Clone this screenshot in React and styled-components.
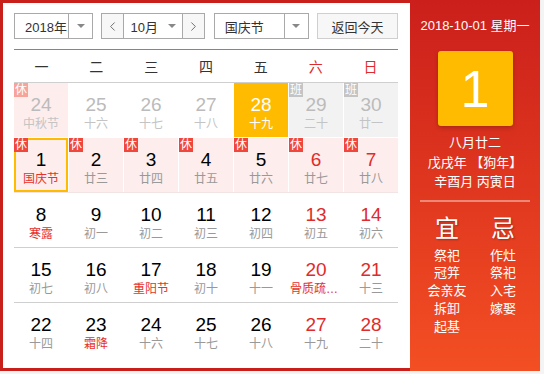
import React from 'react';
import styled, { createGlobalStyle } from 'styled-components';
import { ChevronLeft, ChevronRight } from 'lucide-react';

const GlobalStyle = createGlobalStyle`
  body {
    margin: 0;
    background: #f4f4f4;
    font-family: "Liberation Sans", "Noto Sans CJK SC", sans-serif;
  }
  * { box-sizing: border-box; }
`;

const Widget = styled.div`
  display: flex;
  width: 540px;
  height: 371px;
`;

const Main = styled.div`
  width: 410px;
  border: 3px solid #c91f1b;
  border-right: none;
  background: #fff;
  padding: 10px 12px 0 11px;
`;

const Toolbar = styled.div`
  display: flex;
  justify-content: space-between;
  height: 26px;
  padding-bottom: 10px;
  box-sizing: content-box;
  border-bottom: 1px solid #e95c55;
`;

const SelectBox = styled.div`
  display: flex;
  width: ${({ $w }) => $w}px;
  height: 26px;
  border: 1px solid #a9a9a9;
  background: #fff;
  font-size: 13px;
  color: #333;
`;

const SelectLabel = styled.div`
  flex: 1;
  min-width: 0;
  display: flex;
  align-items: center;
  white-space: nowrap;
  justify-content: ${({ $center }) => ($center ? 'center' : 'flex-start')};
  padding-left: ${({ $pad = 0 }) => $pad}px;
`;

const ArrowPart = styled.div`
  width: 24px;
  flex-shrink: 0;
  display: flex;
  align-items: center;
  justify-content: center;
  border-left: 1px solid #a9a9a9;
  &::after {
    content: '';
    border-left: 4px solid transparent;
    border-right: 4px solid transparent;
    border-top: 4px solid #888;
  }
`;

const InlineArrow = styled.span`
  margin: 0 0 0 10px;
  border-left: 4px solid transparent;
  border-right: 4px solid transparent;
  border-top: 4px solid #888;
`;

const StepButton = styled.div`
  width: 22px;
  flex-shrink: 0;
  display: flex;
  align-items: center;
  justify-content: center;
  background: #f7f7f7;
  color: #666;
  border-${({ $side }) => $side}: 1px solid #a9a9a9;
`;

const TodayButton = styled.div`
  width: 81px;
  height: 26px;
  display: flex;
  align-items: center;
  justify-content: center;
  border: 1px solid #cfcfcf;
  background: #f7f7f7;
  font-size: 13px;
  color: #333;
`;

const WeekHeader = styled.div`
  display: grid;
  grid-template-columns: repeat(7, 1fr);
  height: 33px;
  border-bottom: 1px solid #cfcfcf;
`;

const WeekDay = styled.div`
  display: flex;
  align-items: center;
  justify-content: center;
  font-size: 14px;
  color: ${({ $red }) => ($red ? '#e02b2b' : '#333')};
`;

const Week = styled.div`
  display: grid;
  grid-template-columns: repeat(7, 1fr);
  column-gap: 1px;
  height: 55px;
  border-bottom: 1px solid ${({ $line }) => $line};
  &:last-child { border-bottom: none; }
`;

const Cell = styled.div`
  position: relative;
  display: flex;
  flex-direction: column;
  align-items: center;
  padding-top: 12px;
  background: ${({ $bg }) => $bg};
  box-shadow: ${({ $selected }) => ($selected ? 'inset 0 0 0 2px #ffbb00' : 'none')};
  overflow: hidden;
`;

const DayNum = styled.div`
  font-size: 19px;
  line-height: 20px;
  color: ${({ $color }) => $color};
`;

const Lunar = styled.div`
  margin-top: 1px;
  max-width: 52px;
  font-size: 12px;
  line-height: 16px;
  white-space: nowrap;
  overflow: hidden;
  text-overflow: ellipsis;
  color: ${({ $color }) => $color};
`;

const Badge = styled.span`
  position: absolute;
  top: 0;
  left: 0;
  width: 14px;
  height: 14px;
  font-size: 12px;
  line-height: 14px;
  text-align: center;
  color: #fff;
  background: ${({ $bg }) => $bg};
`;

const Side = styled.div`
  width: 130px;
  display: flex;
  flex-direction: column;
  align-items: center;
  background: linear-gradient(#cb1f1b, #f34f23);
  color: #fff;
`;

const DateLine = styled.div`
  margin-top: 17px;
  font-size: 13px;
  line-height: 18px;
`;

const DayCard = styled.div`
  margin-top: 16px;
  width: 75px;
  height: 75px;
  border-radius: 3px;
  background: #ffbb00;
  box-shadow: 0 2px 4px rgba(0, 0, 0, 0.2);
  display: flex;
  align-items: center;
  justify-content: center;
  font-size: 52px;
`;

const LunarInfo = styled.div`
  margin-top: 7px;
  font-size: 13px;
  line-height: 19.5px;
  text-align: center;
`;

const Divider = styled.div`
  margin-top: 8px;
  width: 110px;
  height: 2px;
  background: rgba(255, 255, 255, 0.4);
`;

const Advice = styled.div`
  display: grid;
  grid-template-columns: 56px 56px;
  margin-top: 13px;
`;

const AdviceCol = styled.div`
  display: flex;
  flex-direction: column;
  align-items: center;
`;

const AdviceTitle = styled.div`
  font-size: 24px;
  line-height: 28px;
  text-shadow: 1px 1px 2px rgba(0, 0, 0, 0.3);
`;

const AdviceList = styled.div`
  margin-top: 4px;
  font-size: 13px;
  line-height: 17.8px;
  text-align: center;
  white-space: nowrap;
`;

const PINK = '#fdeeed';
const weekDays = ['一', '二', '三', '四', '五', '六', '日'];

const weeks = [
  {
    line: '#fff',
    days: [
      { d: 24, l: '中秋节', muted: true, bg: PINK, badge: 'fade' },
      { d: 25, l: '十六', muted: true },
      { d: 26, l: '十七', muted: true },
      { d: 27, l: '十八', muted: true },
      { d: 28, l: '十九', today: true, bg: '#ffbb00' },
      { d: 29, l: '二十', muted: true, bg: '#f2f2f2', badge: 'work' },
      { d: 30, l: '廿一', muted: true, bg: '#f2f2f2', badge: 'work' },
    ],
  },
  {
    line: '#f2e4e4',
    days: [
      { d: 1, l: '国庆节', fest: true, selected: true },
      { d: 2, l: '廿三' },
      { d: 3, l: '廿四' },
      { d: 4, l: '廿五' },
      { d: 5, l: '廿六' },
      { d: 6, l: '廿七' },
      { d: 7, l: '廿八' },
    ].map((c) => ({ ...c, bg: PINK, badge: 'rest' })),
  },
  {
    line: '#cfcfcf',
    days: [
      { d: 8, l: '寒露', fest: true },
      { d: 9, l: '初一' },
      { d: 10, l: '初二' },
      { d: 11, l: '初三' },
      { d: 12, l: '初四' },
      { d: 13, l: '初五' },
      { d: 14, l: '初六' },
    ],
  },
  {
    line: '#cfcfcf',
    days: [
      { d: 15, l: '初七' },
      { d: 16, l: '初八' },
      { d: 17, l: '重阳节', fest: true },
      { d: 18, l: '初十' },
      { d: 19, l: '十一' },
      { d: 20, l: '骨质疏松日', fest: true },
      { d: 21, l: '十三' },
    ],
  },
  {
    line: '#cfcfcf',
    days: [
      { d: 22, l: '十四' },
      { d: 23, l: '霜降', fest: true },
      { d: 24, l: '十六' },
      { d: 25, l: '十七' },
      { d: 26, l: '十八' },
      { d: 27, l: '十九' },
      { d: 28, l: '二十' },
    ],
  },
];

const badgeInfo = {
  rest: { text: '休', bg: '#f0463c' },
  fade: { text: '休', bg: '#f8a29c' },
  work: { text: '班', bg: '#c4c4c4' },
};

const numColor = (c, i) => {
  if (c.today) return '#fff';
  if (c.muted) return '#bbb';
  return i >= 5 ? '#e02b2b' : '#000';
};

const lunarColor = (c) => {
  if (c.today) return '#fff';
  if (c.muted) return '#c4c4c4';
  return c.fest ? '#e5322d' : '#999';
};

const App = () => (
  <>
    <GlobalStyle />
    <Widget>
      <Main>
        <Toolbar>
          <SelectBox $w={79}>
            <SelectLabel $pad={10}>2018年</SelectLabel>
            <ArrowPart />
          </SelectBox>
          <SelectBox $w={104}>
            <StepButton $side="right"><ChevronLeft size={15} strokeWidth={1.5} /></StepButton>
            <SelectLabel $center>10月<InlineArrow /></SelectLabel>
            <StepButton $side="left"><ChevronRight size={15} strokeWidth={1.5} /></StepButton>
          </SelectBox>
          <SelectBox $w={95}>
            <SelectLabel $pad={10}>国庆节</SelectLabel>
            <ArrowPart />
          </SelectBox>
          <TodayButton>返回今天</TodayButton>
        </Toolbar>

        <WeekHeader>
          {weekDays.map((w, i) => (
            <WeekDay key={w} $red={i >= 5}>{w}</WeekDay>
          ))}
        </WeekHeader>

        {weeks.map((week, wi) => (
          <Week key={wi} $line={week.line}>
            {week.days.map((c, i) => (
              <Cell key={i} $bg={c.bg || '#fff'} $selected={c.selected}>
                {c.badge && <Badge $bg={badgeInfo[c.badge].bg}>{badgeInfo[c.badge].text}</Badge>}
                <DayNum $color={numColor(c, i)}>{c.d}</DayNum>
                <Lunar $color={lunarColor(c)}>{c.l}</Lunar>
              </Cell>
            ))}
          </Week>
        ))}
      </Main>

      <Side>
        <DateLine>2018-10-01 星期一</DateLine>
        <DayCard>1</DayCard>
        <LunarInfo>
          八月廿二<br />
          戊戌年 【狗年】<br />
          辛酉月 丙寅日
        </LunarInfo>
        <Divider />
        <Advice>
          <AdviceCol>
            <AdviceTitle>宜</AdviceTitle>
            <AdviceList>祭祀<br />冠笄<br />会亲友<br />拆卸<br />起基</AdviceList>
          </AdviceCol>
          <AdviceCol>
            <AdviceTitle>忌</AdviceTitle>
            <AdviceList>作灶<br />祭祀<br />入宅<br />嫁娶</AdviceList>
          </AdviceCol>
        </Advice>
      </Side>
    </Widget>
  </>
);

export default App;
